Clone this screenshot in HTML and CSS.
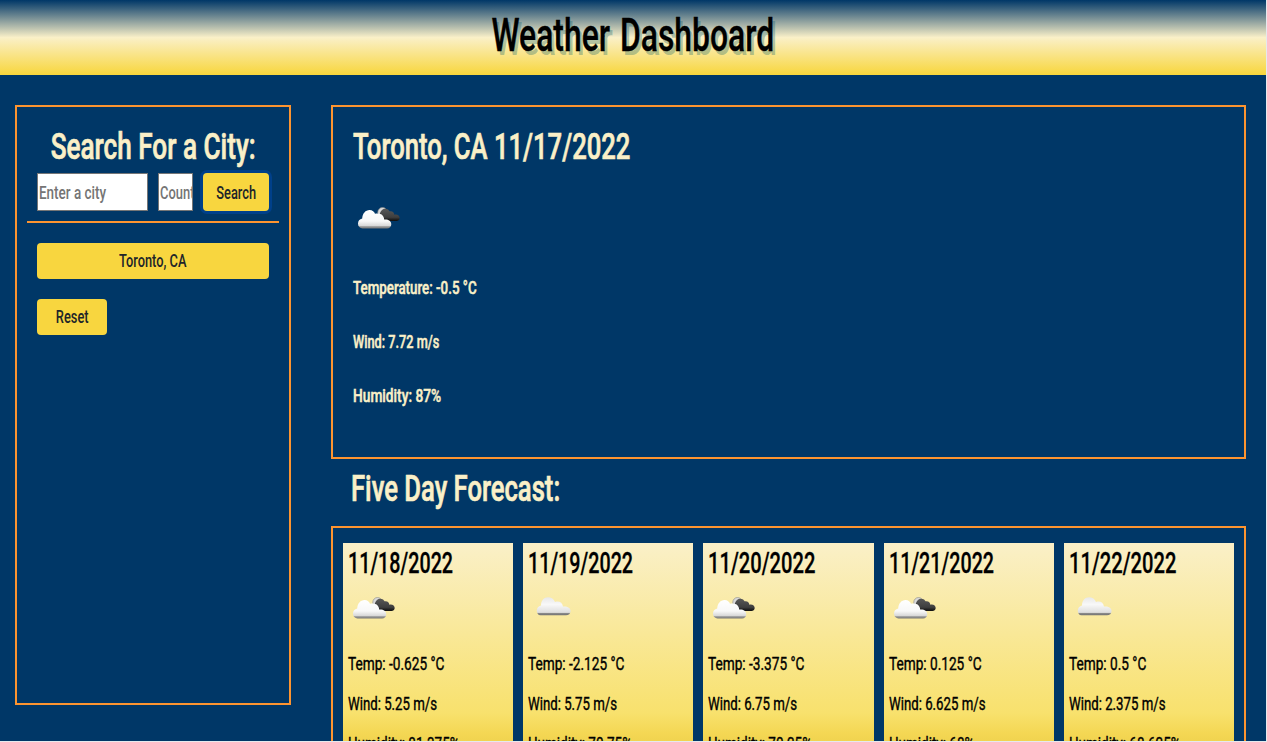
FILE: index.html
```html
<!DOCTYPE html>
<html lang="en">
<head>
<meta charset="utf-8">
<title>Weather Dashboard</title>
<link rel="stylesheet" href="styles.css">
</head>
<body>
<svg class="defs" width="0" height="0" aria-hidden="true">
  <defs>
    <linearGradient id="white" x1="0" y1="0" x2="0" y2="1"><stop offset="0" stop-color="#fff"/><stop offset=".6" stop-color="#f8f8f8"/><stop offset=".85" stop-color="#d8d8d8"/><stop offset=".9" stop-color="#999"/><stop offset="1" stop-color="#777"/></linearGradient>
    <linearGradient id="gray" x1="0" y1="0" x2="0" y2="1"><stop offset="0" stop-color="#e8e8e8"/><stop offset=".4" stop-color="#f8f8f8"/><stop offset=".84" stop-color="#dedede"/><stop offset=".9" stop-color="#888"/><stop offset="1" stop-color="#707070"/></linearGradient>
    <linearGradient id="dark" x1="0" y1="0" x2="0" y2="1"><stop offset="0" stop-color="#585858"/><stop offset=".7" stop-color="#3e3e3e"/><stop offset="1" stop-color="#0c0c0c"/></linearGradient>
    <symbol id="broken" viewBox="0 0 50 50">
      <circle cx="29.500" cy="18.200" r="4.700" fill="#d9d9d9" stroke="#888" stroke-width=".6"/>
      <path d="M26 27C26 21 27 15.500 31.500 14.700C34.500 14.500 36 16 36.500 17.300C39.500 16.800 41.300 18.500 41.300 20.800C44.500 20 46.700 22 46.700 24C46.700 26 45 27 43.500 27Z" fill="url(#dark)"/>
      <path d="M9.500 34.500C7 34.500 5 32.500 5 29.800C5 27 6.500 25 9.200 24.500C9.500 19.500 12.500 16 16.500 16C19.500 16 21.300 17.800 22 19.800C26.500 18.500 31 20.500 31.200 25.500C35 25 38.300 27 38.300 30.300C38.300 33 36.500 34.500 34 34.500Z" fill="url(#white)"/>
    </symbol>
    <symbol id="cloud" viewBox="0 0 50 50">
      <path d="M12.500 31.300C10 31.300 8.800 29 8.800 26.500C8.800 24 10.500 22 13 21.500C13 16.500 16 13.300 20 13.300C23 13.300 25.500 14.500 27 18C31 16.500 34.500 18.500 35 22.500C39 22 42.600 23.700 42.600 27C42.600 29.700 40.500 31.300 38 31.300Z" fill="url(#gray)"/>
    </symbol>
  </defs>
</svg>
<header class="banner"><h1><span>Weather Dashboard</span></h1></header>
<div class="layout">
  <aside class="sidebar">
    <h2><span class="fit-wide">Search For a City:</span></h2>
    <form class="search">
      <div class="field field-city"><span>Enter a city</span></div>
      <div class="field field-country"><span>Country</span></div>
      <button type="button" class="button button-search"><span>Search</span></button>
    </form>
    <div class="history">
      <button type="button" class="button"><span>Toronto, CA</span></button>
      <button type="button" class="button button-reset"><span>Reset</span></button>
    </div>
  </aside>
  <main class="content">
    <section class="current">
      <h2><span>Toronto, CA 11/17/2022</span></h2>
      <svg class="icon"><use href="#broken"/></svg>
      <p><span class="temp">Temperature: -0.5 °C</span></p>
      <p><span class="wind">Wind: 7.72 m/s</span></p>
      <p><span class="humidity">Humidity: 87%</span></p>
    </section>
    <h2 class="forecast-title"><span>Five Day Forecast:</span></h2>
    <section class="forecast">
      <article class="card"><h3><span>11/18/2022</span></h3><svg class="icon"><use href="#broken"/></svg><p><span class="temp">Temp: -0.625 °C</span></p><p><span class="wind">Wind: 5.25 m/s</span></p><p><span class="humidity">Humidity: 81.375%</span></p></article>
      <article class="card"><h3><span>11/19/2022</span></h3><svg class="icon"><use href="#cloud"/></svg><p><span class="temp">Temp: -2.125 °C</span></p><p><span class="wind">Wind: 5.75 m/s</span></p><p><span class="humidity">Humidity: 70.75%</span></p></article>
      <article class="card"><h3><span class="fit-wide">11/20/2022</span></h3><svg class="icon"><use href="#broken"/></svg><p><span class="temp">Temp: -3.375 °C</span></p><p><span class="wind">Wind: 6.75 m/s</span></p><p><span class="humidity">Humidity: 70.25%</span></p></article>
      <article class="card"><h3><span>11/21/2022</span></h3><svg class="icon"><use href="#broken"/></svg><p><span class="temp">Temp: 0.125 °C</span></p><p><span class="wind">Wind: 6.625 m/s</span></p><p><span class="humidity">Humidity: 68%</span></p></article>
      <article class="card"><h3><span class="fit-wide">11/22/2022</span></h3><svg class="icon"><use href="#cloud"/></svg><p><span class="temp">Temp: 0.5 °C</span></p><p><span class="wind">Wind: 2.375 m/s</span></p><p><span class="humidity">Humidity: 68.625%</span></p></article>
    </section>
  </main>
</div>
</body>
</html>
```
FILE: styles.css
```css
* { box-sizing: border-box; }
html { background: #e6e9ed; overflow: hidden; }
body {
  margin: 0;
  width: 1266px;
  height: 741px;
  overflow: hidden;
  background: #003767;
  color: #faf0c8;
  font: 500 18.2px/24px Roboto, "Liberation Sans", sans-serif;
}
.defs { display: block; height: 0; }
h1, h2, h3, p { margin: 0; font-weight: 500; }
h1 span, h2 span, h3 span, p span, .field span, .button span {
  display: inline-block;
  white-space: nowrap;
  transform: scaleX(.74);
  transform-origin: left center;
}

.banner {
  height: 75px;
  text-align: center;
  background: linear-gradient(#003767, #faf0c8 50%, #f8d63c);
}
h1 { color: #000; font-size: 45.5px; line-height: 71px; }
h1 span {
  transform: scaleX(.7);
  transform-origin: center;
  word-spacing: 3px;
  text-shadow: 4px 4px rgba(0, 87, 103, .3);
  -webkit-text-stroke: .4px;
}
h2 { font-size: 36.5px; line-height: 40px; height: 40px; }
h2 span { transform: scaleX(.702); -webkit-text-stroke: .7px; }
h2 .fit-wide { transform: scaleX(.716); }

.layout { display: flex; gap: 40px; padding: 30px 20px 0 15px; }
.sidebar {
  flex: none;
  width: 276px;
  height: 600px;
  border: 2px solid #fd9430;
  padding: 20px 10px;
}
.sidebar h2 { display: flex; justify-content: center; }
.sidebar h2 span { transform-origin: center; }
.search {
  display: flex;
  height: 56px;
  margin: 0;
  padding: 6px 10px 10px;
  border-bottom: 2px solid #fd9430;
}
.field {
  height: 38px;
  border: 1px solid #767676;
  background: #fff;
  color: #757575;
  line-height: 37px;
  padding-left: 1px;
  overflow: hidden;
}
.field-city { width: 111px; margin-right: 10px; }
.field-country { width: 35px; margin-right: 10px; padding-right: 1px; }
.field-country span { transform: scaleX(.71); }
.button {
  display: block;
  width: 100%;
  height: 36px;
  padding: 0;
  border: 0;
  border-radius: 4px;
  background: #f8d63f;
  color: #212529;
  font: inherit;
  text-align: center;
}
.button span { transform: scaleX(.705); transform-origin: center; }
.button-search { width: 66px; height: 38px; padding-top: 1px; box-shadow: 0 0 0 3px #00408a; }
.history { display: grid; gap: 20px; padding: 20px 10px 0; }
.button-reset { width: 70px; }

.content { flex: 1; min-width: 0; }
.current { height: 354px; border: 2px solid #fd9430; padding: 20px; }
.icon { display: block; width: 50px; height: 50px; }
.current .icon { margin: 27px 0 32px; }
.current p { height: 24px; margin-bottom: 30px; }
.current p span { -webkit-text-stroke: .5px; }
.current .temp { transform: scaleX(.734); }
.current .wind { transform: scaleX(.7); }
.current .humidity { transform: scaleX(.755); }
.forecast-title { padding: 10px 20px 0; height: 67px; }
.forecast {
  display: flex;
  gap: 10px;
  height: 260px;
  border: 2px solid #fd9430;
  padding: 15px 10px;
}
.card {
  flex: 1;
  min-width: 0;
  padding: 5px;
  color: #000;
  background: linear-gradient(#faf0c8, #f8e16d 170px, #f4d754 190px, #f0d24e 200px);
}
.card h3 { font-size: 29px; line-height: 31px; }
.card h3 span { transform: scaleX(.68); -webkit-text-stroke: .3px; }
.card h3 .fit-wide { transform: scaleX(.695); }
.card .icon { margin: 5px 0 18px; }
.card p { height: 24px; margin-bottom: 16px; font-weight: 400; }
.card p span { -webkit-text-stroke: .4px; }
.card .temp { transform: scaleX(.75); }
.card .wind { transform: scaleX(.727); }
```
